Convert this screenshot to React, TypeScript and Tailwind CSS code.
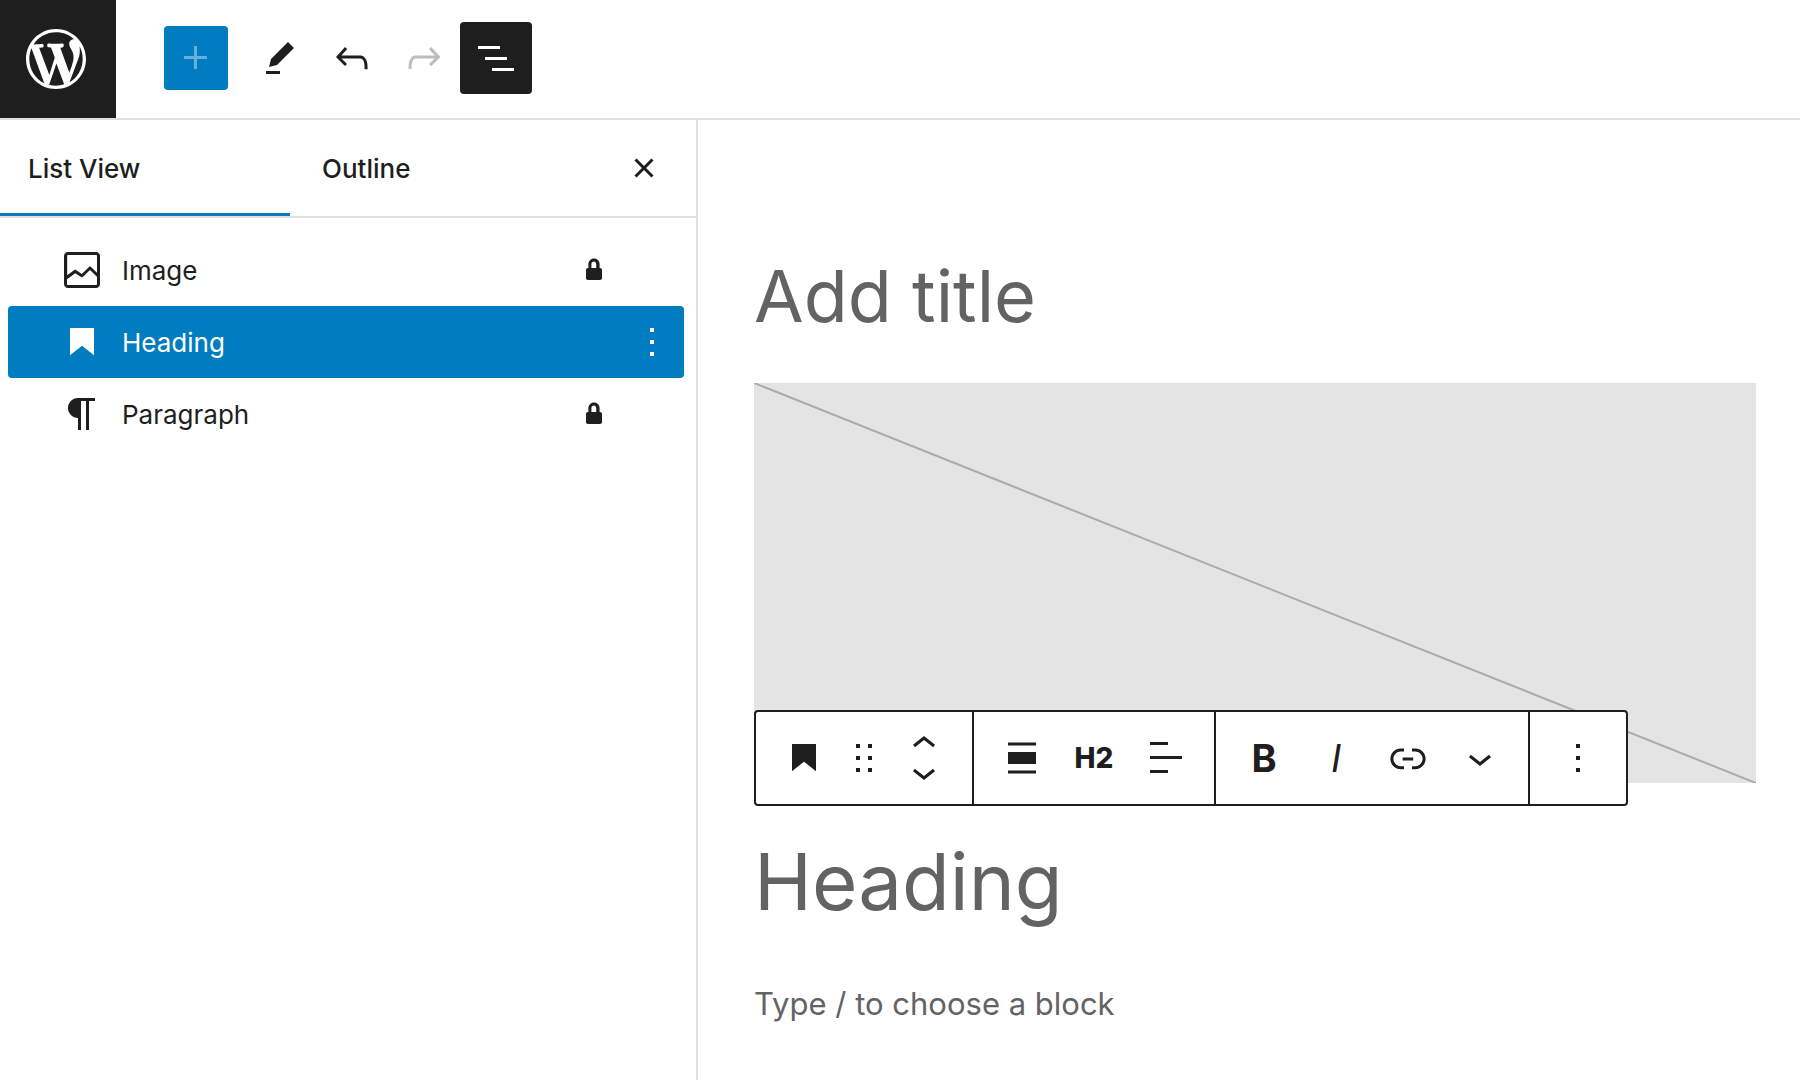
import { useState } from "react";
import type { ReactNode } from "react";

const paths = {
  plus: "M11 12.5V17.5H12.5V12.5H17.5V11H12.5V6H11V11H6V12.5H11Z",
  edit: "m19 7-3-3-8.5 8.5-1 4 4-1L19 7Zm-7 11.5H5V20h7v-1.5Z",
  undo: "M18.3 11.7c-.6-.6-1.4-.9-2.3-.9H6.7l2.9-3.3-1.1-1-4.5 5L8.5 16l1-1-2.7-2.7H16c.5 0 .9.2 1.3.5 1 1 1 3.4 1 4.5v.3h1.5v-.2c0-1.5 0-4.3-1.5-5.7z",
  redo: "M15.6 6.5l-1.1 1 2.9 3.3H8c-.9 0-1.7.3-2.3.9-1.4 1.5-1.4 4.2-1.4 5.6v.2h1.5v-.3c0-1.1 0-3.5 1-4.5.3-.3.7-.5 1.3-.5h9.2L14.5 15l1.1 1.1 4.6-4.6-4.6-5z",
  listView: "M3 6h11v1.5H3V6Zm3.5 5.5h11V13h-11v-1.5ZM21 17H10v1.5h11V17Z",
  close:
    "M12 13.06l3.712 3.713 1.061-1.06L13.061 12l3.712-3.712-1.06-1.06L12 10.938 8.288 7.227l-1.061 1.06L10.939 12l-3.712 3.712 1.06 1.061L12 13.061z",
  image:
    "M19 3H5c-1.1 0-2 .9-2 2v14c0 1.1.9 2 2 2h14c1.1 0 2-.9 2-2V5c0-1.1-.9-2-2-2zM5 4.5h14c.3 0 .5.2.5.5v8.4l-3-2.9c-.3-.3-.8-.3-1 0L11.9 14 9 12c-.3-.2-.6-.2-.8 0l-3.6 2.6V5c-.1-.3.1-.5.4-.5zm14 15H5c-.3 0-.5-.2-.5-.5v-2.4l4.1-3 3 1.9c.3.2.7.2.9-.1L16 12l3.5 3.4V19c0 .3-.2.5-.5.5z",
  heading: "M6 5V18.5911L12 13.8473L18 18.5911V5H6Z",
  paragraph:
    "m9.99609 14v-.2251l.00391.0001v6.225h1.5v-14.5h2.5v14.5h1.5v-14.5h3v-1.5h-8.50391c-2.76142 0-5 2.23858-5 5 0 2.7614 2.23858 5 5 5z",
  lock: "M15 11h-.2V9c0-1.5-1.2-2.8-2.8-2.8S9.2 7.5 9.2 9v2H9c-.6 0-1 .4-1 1v4c0 .6.4 1 1 1h6c.6 0 1-.4 1-1v-4c0-.6-.4-1-1-1zm-1.8 0h-2.5V9c0-.7.6-1.2 1.2-1.2s1.2.6 1.2 1.2v2z",
  more: "M13 19h-2v-2h2v2zm0-6h-2v-2h2v2zm0-6h-2V5h2v2z",
  drag: "M8 7h2V5H8v2zm0 6h2v-2H8v2zm0 6h2v-2H8v2zm6-14v2h2V5h-2zm0 8h2v-2h-2v2zm0 6h2v-2h-2v2z",
  chevronUp: "M6.5 12.4L12 8l5.5 4.4-.9 1.2L12 10l-4.5 3.6-1-1.2z",
  chevronDown: "M17.5 11.6L12 16l-5.5-4.4.9-1.2L12 14l4.5-3.6 1 1.2z",
  alignNone: "M5 15h14V9H5v6zm0 4.8h14v-1.5H5v1.5zM5 4.2v1.5h14V4.2H5z",
  textLeft: "M13 5.5H4V4h9v1.5Zm7 7H4V11h16v1.5Zm-7 7H4V18h9v1.5Z",
  link: "M15.6 7.2H14v1.5h1.6c2 0 3.7 1.7 3.7 3.7s-1.7 3.7-3.7 3.7H14v1.5h1.6c2.8 0 5.2-2.3 5.2-5.2 0-2.9-2.3-5.2-5.2-5.2zM4.7 12.4c0-2 1.7-3.7 3.7-3.7H10V7.2H8.4c-2.9 0-5.2 2.3-5.2 5.2 0 2.9 2.3 5.2 5.2 5.2H10v-1.5H8.4c-2 0-3.7-1.7-3.7-3.7zm4.6.9h5.3v-1.5H9.3v1.5z",
};

type IconName = keyof typeof paths;

function Icon({ name }: { name: IconName }) {
  return (
    <svg viewBox="0 0 24 24" className="size-12 shrink-0" fill="currentColor" aria-hidden="true">
      <path d={paths[name]} />
    </svg>
  );
}

function WordPressLogo() {
  return (
    <svg viewBox="-2 -2 24 24" className="size-[72px]" fill="currentColor" aria-hidden="true">
      <path d="M20 10c0-5.51-4.49-10-10-10C4.48 0 0 4.49 0 10c0 5.52 4.48 10 10 10 5.51 0 10-4.48 10-10zM7.78 15.37L4.37 6.22c.55-.02 1.17-.08 1.17-.08.5-.06.44-1.13-.06-1.11 0 0-1.45.11-2.37.11-.18 0-.37 0-.58-.01C4.12 2.69 6.87 1.11 10 1.11c2.33 0 4.45.87 6.05 2.34-.68-.11-1.65.39-1.65 1.58 0 .74.45 1.36.9 2.1.35.61.55 1.36.55 2.46 0 1.49-1.4 5-1.4 5l-3.03-8.37c.54-.02.82-.17.82-.17.5-.05.44-1.25-.06-1.22 0 0-1.44.12-2.38.12-.87 0-2.33-.12-2.33-.12-.5-.03-.56 1.2-.06 1.22l.92.08 1.26 3.41zM17.41 10c.24-.64.74-1.87.43-4.25.7 1.29 1.05 2.71 1.05 4.25 0 3.29-1.73 6.24-4.4 7.78.97-2.59 1.94-5.2 2.92-7.78zM6.1 18.09C3.12 16.65 1.11 13.53 1.11 10c0-1.3.23-2.48.72-3.59C3.25 10.3 4.67 14.2 6.1 18.09zm4.03-6.63l2.58 6.98c-.86.29-1.76.45-2.71.45-.79 0-1.57-.11-2.29-.33.81-2.38 1.62-4.74 2.42-7.1z" />
    </svg>
  );
}

function ToolButton({ label, children, disabled }: { label: string; children: ReactNode; disabled?: boolean }) {
  return (
    <button
      type="button"
      aria-label={label}
      disabled={disabled}
      className="flex size-[72px] shrink-0 items-center justify-center disabled:text-[#bdbdbd]"
    >
      {children}
    </button>
  );
}

function Header() {
  return (
    <header className="flex h-[120px] border-b-2 border-[#e0e0e0]">
      <a href="#" aria-label="View posts" className="flex w-[116px] items-center justify-center bg-[#1e1e1e] pr-1 text-white">
        <WordPressLogo />
      </a>
      <div className="flex h-[116px] items-center pl-12">
        <button
          type="button"
          aria-label="Toggle block inserter"
          className="mr-4 flex size-16 items-center justify-center rounded bg-[#007cc0] text-[#66b0d9]"
        >
          <Icon name="plus" />
        </button>
        <ToolButton label="Tools">
          <Icon name="edit" />
        </ToolButton>
        <ToolButton label="Undo">
          <Icon name="undo" />
        </ToolButton>
        <ToolButton label="Redo" disabled>
          <Icon name="redo" />
        </ToolButton>
        <button
          type="button"
          aria-label="Document overview"
          aria-pressed="true"
          className="flex size-[72px] items-center justify-center rounded bg-[#1e1e1e] text-white"
        >
          <Icon name="listView" />
        </button>
      </div>
    </header>
  );
}

const blocks: { name: string; icon: IconName; locked: boolean }[] = [
  { name: "Image", icon: "image", locked: true },
  { name: "Heading", icon: "heading", locked: false },
  { name: "Paragraph", icon: "paragraph", locked: true },
];

function Sidebar() {
  const [selected, setSelected] = useState("Heading");
  return (
    <aside className="w-[698px] shrink-0 border-r-2 border-[#e0e0e0]">
      <div className="flex h-[98px] border-b-2 border-[#e0e0e0]">
        <div role="tablist" className="flex flex-1">
          <button
            type="button"
            role="tab"
            aria-selected="true"
            className="w-[290px] border-b-3 border-[#007cba] pt-1 pl-7 text-left text-[26px] font-medium"
          >
            List View
          </button>
          <button type="button" role="tab" aria-selected="false" className="border-b-3 border-transparent px-8 pt-1 text-[26px] font-medium">
            Outline
          </button>
        </div>
        <button type="button" aria-label="Close" className="mr-4 flex w-[72px] items-center justify-center">
          <Icon name="close" />
        </button>
      </div>
      <ul className="pt-4 pr-3 pl-2">
        {blocks.map((block) => (
          <li
            key={block.name}
            className={
              block.name === selected ? "flex h-[72px] rounded bg-[#007cc0] text-white" : "flex h-[72px] rounded"
            }
          >
            <button
              type="button"
              onClick={() => setSelected(block.name)}
              className="flex flex-1 items-center gap-4 pl-[50px] text-left text-[26px]"
            >
              <Icon name={block.icon} />
              <span className="pt-px">{block.name}</span>
            </button>
            {block.locked && (
              <button type="button" aria-label={"Unlock " + block.name} className="flex w-[52px] items-center justify-center">
                <Icon name="lock" />
              </button>
            )}
            <div className="flex w-16 items-center justify-center">
              {block.name === selected && (
                <button type="button" aria-label={"Options for " + block.name}>
                  <Icon name="more" />
                </button>
              )}
            </div>
          </li>
        ))}
      </ul>
    </aside>
  );
}

function BlockToolbar() {
  return (
    <div
      role="toolbar"
      aria-label="Block tools"
      className="absolute top-[327px] left-0 flex h-24 divide-x-2 divide-[#1e1e1e] rounded border-2 border-[#1e1e1e] bg-white"
    >
      <div className="flex items-center gap-3 px-6">
        <button type="button" aria-label="Heading">
          <Icon name="heading" />
        </button>
        <button type="button" aria-label="Drag">
          <Icon name="drag" />
        </button>
        <div className="flex flex-col">
          <button type="button" aria-label="Move up">
            <svg viewBox="0 5 24 14" className="h-7 w-12" fill="currentColor" aria-hidden="true">
              <path d={paths.chevronUp} />
            </svg>
          </button>
          <button type="button" aria-label="Move down">
            <svg viewBox="0 5 24 14" className="h-7 w-12" fill="currentColor" aria-hidden="true">
              <path d={paths.chevronDown} />
            </svg>
          </button>
        </div>
      </div>
      <div className="flex items-center px-3">
        <ToolButton label="Align">
          <Icon name="alignNone" />
        </ToolButton>
        <ToolButton label="Change level">
          <span className="text-[28px] font-extrabold">H2</span>
        </ToolButton>
        <ToolButton label="Align text">
          <Icon name="textLeft" />
        </ToolButton>
      </div>
      <div className="flex items-center px-3">
        <ToolButton label="Bold">
          <span className="text-[38px] font-bold">B</span>
        </ToolButton>
        <ToolButton label="Italic">
          <span className="text-[38px] italic">I</span>
        </ToolButton>
        <ToolButton label="Link">
          <Icon name="link" />
        </ToolButton>
        <ToolButton label="More">
          <Icon name="chevronDown" />
        </ToolButton>
      </div>
      <div className="flex items-center px-3">
        <ToolButton label="Options">
          <Icon name="more" />
        </ToolButton>
      </div>
    </div>
  );
}

function Canvas() {
  return (
    <main className="min-w-0 flex-1 pt-32 pr-11 pb-9 pl-14">
      <input
        type="text"
        aria-label="Add title"
        placeholder="Add title"
        className="block h-24 w-full text-[72px] outline-none placeholder:text-[#636363]"
      />
      <div className="relative mt-[39px]">
        <svg
          viewBox="0 0 1000 400"
          preserveAspectRatio="none"
          className="block h-[400px] w-full bg-[#e4e4e4] text-[#aaaaaa]"
          role="img"
          aria-label="Image placeholder"
        >
          <path d="M0 0L1000 400" stroke="currentColor" strokeWidth="2" fill="none" />
        </svg>
        <BlockToolbar />
      </div>
      <input
        type="text"
        aria-label="Heading"
        placeholder="Heading"
        className="mt-11 block h-[108px] w-full text-[78px] outline-none placeholder:text-[#636363]"
      />
      <input
        type="text"
        aria-label="Paragraph"
        placeholder="Type / to choose a block"
        className="mt-11 block h-12 w-full text-[31px] outline-none placeholder:text-[#636363]"
      />
    </main>
  );
}

export default function App() {
  return (
    <div className="flex min-h-screen flex-col bg-white font-['Inter','Liberation_Sans',sans-serif] text-[#1e1e1e]">
      <Header />
      <div className="flex flex-1">
        <Sidebar />
        <Canvas />
      </div>
    </div>
  );
}
